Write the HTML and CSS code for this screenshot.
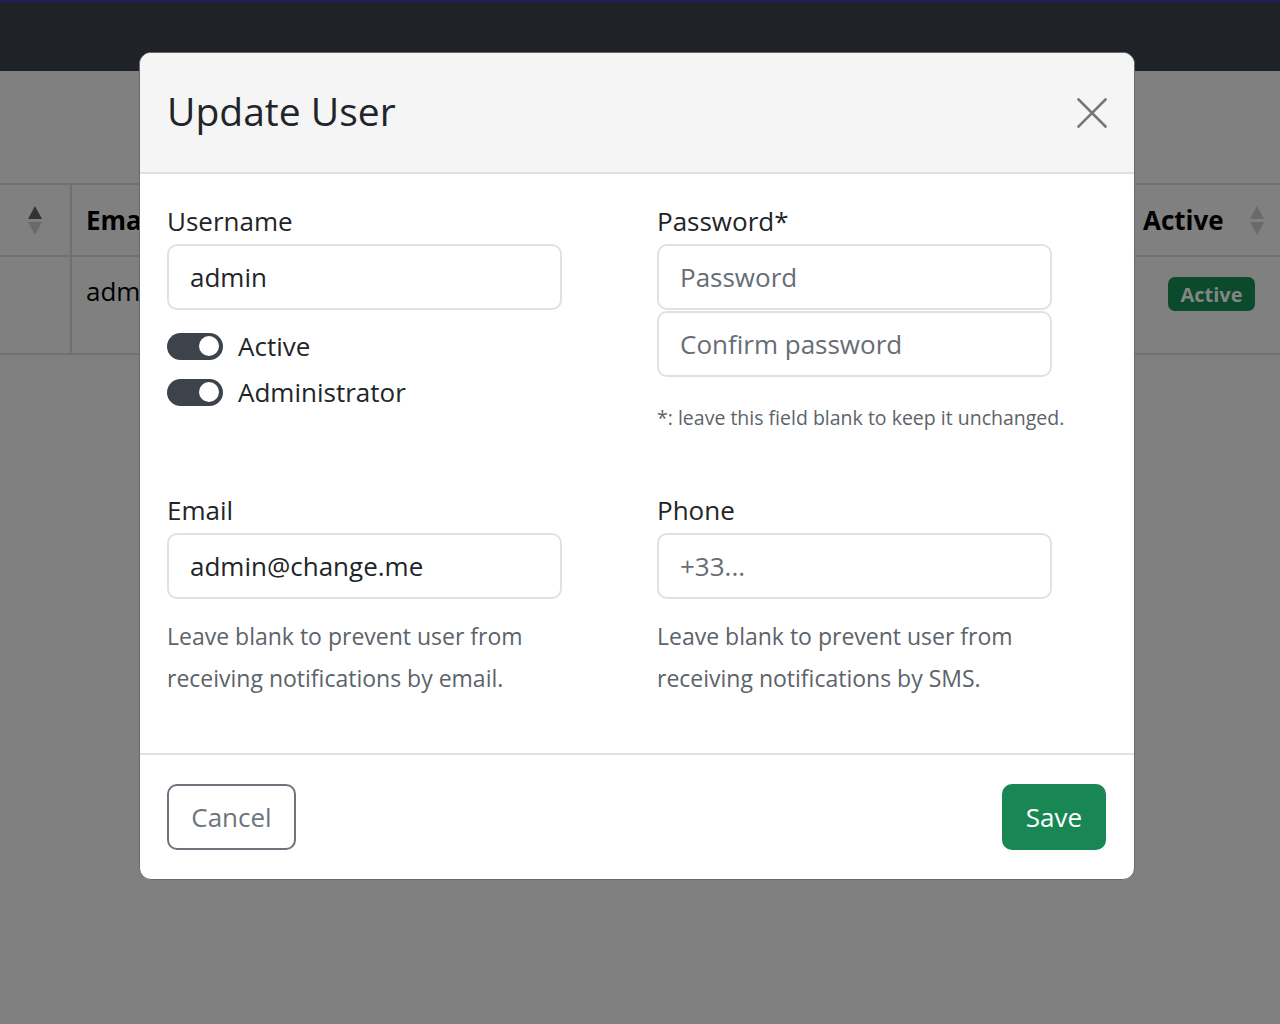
FILE: index.html
```html
<!DOCTYPE html>
<html lang="en">
<head>
<meta charset="utf-8">
<title>Update User</title>
<link rel="stylesheet" href="styles.css">
</head>
<body>
<div class="page">
  <header class="navbar"></header>
  <div class="spacer"></div>
  <div class="table">
    <div class="tr th">
      <div class="cell c1"><span class="sort"><span class="up"></span><span class="down"></span></span></div>
      <div class="cell c2">Email</div>
      <div class="cell c3">Active <span class="sort sort-r"><span class="up light"></span><span class="down"></span></span></div>
    </div>
    <div class="tr td">
      <div class="cell c1"></div>
      <div class="cell c2 normal">admin</div>
      <div class="cell c3"><span class="badge">Active</span></div>
    </div>
  </div>
</div>

<div class="modal">
  <div class="modal-header">
    <h5 class="modal-title">Update User</h5>
    <button class="btn-close" aria-label="Close">
      <svg width="30" height="30" viewBox="0 0 30 30"><path d="M1.5 1.5 L28.5 28.5 M28.5 1.5 L1.5 28.5" stroke="#777" stroke-width="2.6" stroke-linecap="square" fill="none"/></svg>
    </button>
  </div>
  <div class="modal-body">
    <div class="field">
      <label class="label">Username</label>
      <input class="input" type="text" value="admin">
      <div class="switches">
        <div class="switch-row"><span class="switch"><span class="knob"></span></span><span>Active</span></div>
        <div class="switch-row"><span class="switch"><span class="knob"></span></span><span>Administrator</span></div>
      </div>
    </div>
    <div class="field">
      <label class="label">Password*</label>
      <input class="input" type="password" placeholder="Password">
      <input class="input input-second" type="password" placeholder="Confirm password">
      <div class="note">*: leave this field blank to keep it unchanged.</div>
    </div>
    <div class="field">
      <label class="label">Email</label>
      <input class="input" type="text" value="admin@change.me">
      <div class="help">Leave blank to prevent user from<br>receiving notifications by email.</div>
    </div>
    <div class="field">
      <label class="label">Phone</label>
      <input class="input" type="text" placeholder="+33...">
      <div class="help">Leave blank to prevent user from<br>receiving notifications by SMS.</div>
    </div>
  </div>
  <div class="modal-footer">
    <button class="btn btn-cancel">Cancel</button>
    <button class="btn btn-save">Save</button>
  </div>
</div>
</body>
</html>
```

FILE: styles.css
```css
* { box-sizing: border-box; }
html, body { margin: 0; padding: 0; }
body {
  width: 1280px;
  height: 1024px;
  overflow: hidden;
  background: #808080;
  font-family: "Open Sans", "Noto Sans", sans-serif;
  color: #212529;
}
.page { display: flex; flex-direction: column; }
.navbar {
  height: 71px;
  background: #1f2226;
  border-top: 2px solid #2b1a5e;
}
.spacer { height: 112px; }
.table {
  border-top: 2px solid #707070;
}
.tr { display: flex; border-bottom: 2px solid #707070; }
.th { height: 72px; }
.td { height: 98px; }
.cell { display: flex; align-items: center; font-size: 26px; }
.td .cell { align-items: flex-start; padding-top: 20px; }
.c1 { width: 72px; border-right: 2px solid #707070; justify-content: center; }
.c2 { flex: 1; padding-left: 14px; font-weight: 700; color: #000; }
.c2.normal { font-weight: 400; color: #000; }
.c3 { width: 142px; padding-left: 5px; font-weight: 700; color: #000; gap: 26px; }
.td .c3 { padding-left: 30px; }
.sort { display: flex; flex-direction: column; gap: 3px; }
.up, .down { width: 0; height: 0; border-left: 7px solid transparent; border-right: 7px solid transparent; }
.up { border-bottom: 13px solid #333; }
.down { border-top: 13px solid #6a6a6a; }
.sort-r .up { border-bottom-color: #6a6a6a; }
.sort-r .down { border-top-color: #6a6a6a; }
.badge {
  display: inline-flex;
  align-items: center;
  justify-content: center;
  width: 87px;
  height: 34px;
  background: #0b4a2d;
  color: #858585;
  border-radius: 7px;
  font-size: 20px;
  font-weight: 700;
}
.td .c2 { padding-top: 16px; line-height: 36px; }

.modal {
  position: fixed;
  top: 52px;
  left: 139px;
  width: 996px;
  background: #fff;
  border-radius: 12px;
  border: 1px solid #6a6a6a;
  overflow: hidden;
}
.modal-header {
  height: 121px;
  background: #f5f5f5;
  border-bottom: 2px solid #dee2e6;
  display: flex;
  align-items: center;
  justify-content: space-between;
  padding: 0 27px 0 27px;
}
.modal-title {
  margin: 0;
  font-size: 39px;
  font-weight: 400;
  color: #212529;
  line-height: 1;
  padding-bottom: 4px;
}
.btn-close {
  background: none;
  border: 0;
  padding: 0;
  width: 30px;
  height: 30px;
  display: flex;
}
.modal-body {
  display: grid;
  grid-template-columns: 395px 395px;
  column-gap: 95px;
  row-gap: 58px;
  padding: 28px 28px 54px 27px;
}
.field { display: flex; flex-direction: column; }
.label {
  font-size: 26px;
  line-height: 39px;
  margin-bottom: 3px;
  color: #212529;
}
.input {
  height: 66px;
  border: 2px solid #dee2e6;
  border-radius: 10px;
  padding: 0 21px;
  font-family: inherit;
  font-size: 26px;
  color: #212529;
  background: #fff;
  outline: none;
}
.input::placeholder { color: #676d74; }
.input-second { margin-top: 1px; }
.switches { margin-top: 13px; display: flex; flex-direction: column; }
.switch-row {
  height: 46px;
  display: flex;
  align-items: center;
  gap: 15px;
  font-size: 26px;
}
.switch {
  width: 56px;
  height: 27px;
  border-radius: 14px;
  background: #3d434b;
  display: flex;
  align-items: center;
  justify-content: flex-end;
  padding-right: 4px;
}
.knob { width: 20px; height: 20px; border-radius: 50%; background: #fff; }
.note {
  margin-top: 26px;
  font-size: 19.5px;
  line-height: 30px;
  color: #5c636a;
  white-space: nowrap;
}
.help {
  margin-top: 16px;
  font-size: 23px;
  line-height: 42px;
  color: #5c636a;
}
.modal-footer {
  height: 126px;
  border-top: 2px solid #dee2e6;
  display: flex;
  align-items: center;
  justify-content: space-between;
  padding: 0 28px 0 27px;
}
.btn {
  height: 66px;
  border-radius: 10px;
  font-family: inherit;
  font-size: 26px;
  padding: 0 21px;
}
.btn-cancel {
  background: #fff;
  border: 2px solid #6c757d;
  color: #6c757d;
  width: 129px;
}
.btn-save {
  background: #198754;
  border: 2px solid #198754;
  color: #fff;
  width: 104px;
}
```
